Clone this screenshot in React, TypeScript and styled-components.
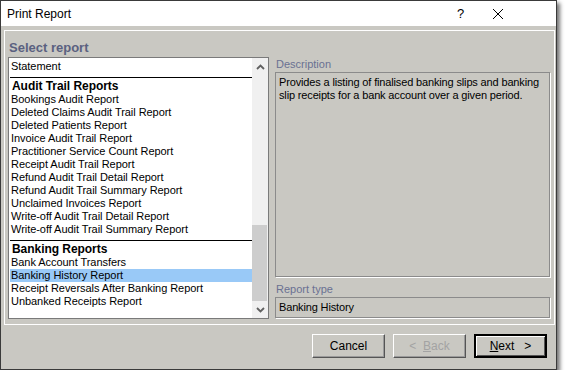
import React, { useState } from "react";
import styled, { createGlobalStyle } from "styled-components";

const GlobalStyle = createGlobalStyle`
	html, body {
		margin: 0;
		padding: 0;
		background: #ffffff;
	}
	body {
		font-family: "Liberation Sans", Arial, sans-serif;
		font-size: 11px;
		color: #000;
	}
`;

const Window = styled.div`
	width: 557px;
	height: 370px;
	box-sizing: border-box;
	border: 1px solid #3a3a3a;
	background: #c9c8c2;
	display: flex;
	flex-direction: column;
	box-shadow: 3px 3px 4px rgba(0, 0, 0, 0.55);
`;

const TitleBar = styled.div`
	height: 25px;
	background: #ffffff;
	display: flex;
	align-items: center;
	padding: 0 40px 0 6px;
	font-size: 12px;
	flex-shrink: 0;
`;

const TitleText = styled.span`
	flex: 1;
`;

const TitleButton = styled.div`
	width: 37px;
	height: 25px;
	display: flex;
	align-items: center;
	justify-content: center;
	font-size: 13px;
`;

const Body = styled.div`
	flex: 1;
	display: flex;
	flex-direction: column;
	padding: 4px 1px 0 3px;
`;

const Panel = styled.div`
	height: 295px;
	box-sizing: border-box;
	border: 1px solid #ffffff;
	display: flex;
	flex-direction: column;
	padding: 0 4px 0 3px;
`;

const PanelTitle = styled.div`
	height: 26px;
	display: flex;
	align-items: center;
	padding: 6px 0 0 1px;
	box-sizing: border-box;
	font-size: 13px;
	font-weight: bold;
	color: #5a6180;
`;

const Columns = styled.div`
	display: flex;
	gap: 6px;
`;

const ListBox = styled.div`
	width: 261px;
	height: 262px;
	box-sizing: border-box;
	border: 1px solid #7a7a7a;
	background: #ffffff;
	display: flex;
`;

const ListContent = styled.div`
	flex: 1;
	padding: 2px 0 0 1px;
	overflow: hidden;
	letter-spacing: -0.05px;
`;

const Row = styled.div<{ $selected?: boolean }>`
	height: 13px;
	line-height: 13px;
	padding-left: 1px;
	white-space: nowrap;
	background: ${(p) => (p.$selected ? "#99c9f7" : "transparent")};
`;

const Group = styled.div`
	margin-top: 4px;
	border-top: 1px solid #000;
`;

const GroupTitle = styled.div`
	height: 15px;
	line-height: 17px;
	padding-left: 2px;
	font-weight: bold;
	font-size: 12px;
`;

const ScrollBar = styled.div`
	width: 16px;
	background: #f0f0f0;
	display: flex;
	flex-direction: column;
`;

const ScrollArrow = styled.div`
	height: 17px;
	display: flex;
	align-items: center;
	justify-content: center;
`;

const ScrollTrack = styled.div`
	flex: 1;
	display: flex;
	flex-direction: column;
	justify-content: flex-end;
`;

const ScrollThumb = styled.div`
	height: 76px;
	margin-right: 1px;
	background: #cdcdcd;
`;

const RightColumn = styled.div`
	width: 275px;
	display: flex;
	flex-direction: column;
`;

const FieldLabel = styled.div<{ $h: number }>`
	height: ${(p) => p.$h}px;
	display: flex;
	align-items: flex-end;
	padding: 0 0 2px 1px;
	box-sizing: border-box;
	color: #6a7192;
`;

const FieldBox = styled.div<{ $h: number }>`
	height: ${(p) => p.$h}px;
	box-sizing: border-box;
	border: 1px solid #8b8b8b;
	box-shadow: 1px 1px 0 #ffffff;
	padding: 3px 3px 0 3px;
	line-height: 13px;
	letter-spacing: -0.15px;
`;

const Footer = styled.div`
	flex: 1;
	display: flex;
	justify-content: flex-end;
	align-items: flex-start;
	gap: 8px;
	padding: 9px 8px 0 0;
`;

const Button = styled.button<{ $default?: boolean }>`
	width: 73px;
	height: 24px;
	box-sizing: border-box;
	font-family: "Liberation Sans", Arial, sans-serif;
	font-size: 12px;
	background: #c9c8c2;
	color: ${(p) => (p.disabled ? "#a3a3a3" : "#000")};
	border: ${(p) => (p.$default ? "2px solid #000" : "1px solid")};
	border-color: ${(p) => (p.$default ? "#000" : "#ffffff #555 #555 #ffffff")};
	box-shadow: ${(p) => (p.$default ? "inset 1px 1px 0 #fff, inset -1px -1px 0 #555" : "inset -1px -1px 0 #9a9a9a")};
	padding: 0;
	u {
		text-decoration: underline;
	}
`;

const auditReports = [
	"Bookings Audit Report",
	"Deleted Claims Audit Trail Report",
	"Deleted Patients Report",
	"Invoice Audit Trail Report",
	"Practitioner Service Count Report",
	"Receipt Audit Trail Report",
	"Refund Audit Trail Detail Report",
	"Refund Audit Trail Summary Report",
	"Unclaimed Invoices Report",
	"Write-off Audit Trail Detail Report",
	"Write-off Audit Trail Summary Report",
];

const bankingReports = [
	"Bank Account Transfers",
	"Banking History Report",
	"Receipt Reversals After Banking Report",
	"Unbanked Receipts Report",
];

function Chevron({ up }: { up?: boolean }) {
	return (
		<svg width="9" height="6" viewBox="0 0 9 6">
			<path
				d={up ? "M1 5 L4.5 1.5 L8 5" : "M1 1 L4.5 4.5 L8 1"}
				fill="none"
				stroke="#606060"
				strokeWidth="1.8"
			/>
		</svg>
	);
}

export default function App() {
	const [selected, setSelected] = useState("Banking History Report");

	return (
		<>
			<GlobalStyle />
			<Window>
				<TitleBar>
					<TitleText>Print Report</TitleText>
					<TitleButton>?</TitleButton>
					<TitleButton>
						<svg width="12" height="12" viewBox="0 0 12 12">
							<path d="M1 1 L11 11 M11 1 L1 11" stroke="#000" strokeWidth="1" />
						</svg>
					</TitleButton>
				</TitleBar>
				<Body>
					<Panel>
						<PanelTitle>Select report</PanelTitle>
						<Columns>
							<ListBox>
								<ListContent>
									<Row>Statement</Row>
									<Group>
										<GroupTitle>Audit Trail Reports</GroupTitle>
										{auditReports.map((r) => (
											<Row key={r} $selected={r === selected} onClick={() => setSelected(r)}>
												{r}
											</Row>
										))}
									</Group>
									<Group>
										<GroupTitle>Banking Reports</GroupTitle>
										{bankingReports.map((r) => (
											<Row key={r} $selected={r === selected} onClick={() => setSelected(r)}>
												{r}
											</Row>
										))}
									</Group>
								</ListContent>
								<ScrollBar>
									<ScrollArrow>
										<Chevron up />
									</ScrollArrow>
									<ScrollTrack>
										<ScrollThumb />
									</ScrollTrack>
									<ScrollArrow>
										<Chevron />
									</ScrollArrow>
								</ScrollBar>
							</ListBox>
							<RightColumn>
								<FieldLabel $h={15}>Description</FieldLabel>
								<FieldBox $h={205}>
									Provides a listing of finalised banking slips and banking slip receipts for a bank account over a given period.
								</FieldBox>
								<FieldLabel $h={20}>Report type</FieldLabel>
								<FieldBox $h={21}>Banking History</FieldBox>
							</RightColumn>
						</Columns>
					</Panel>
					<Footer>
						<Button>Cancel</Button>
						<Button disabled>
							&lt;&nbsp; <u>B</u>ack
						</Button>
						<Button $default>
							<u>N</u>ext&nbsp;&nbsp; &gt;
						</Button>
					</Footer>
				</Body>
			</Window>
		</>
	);
}
